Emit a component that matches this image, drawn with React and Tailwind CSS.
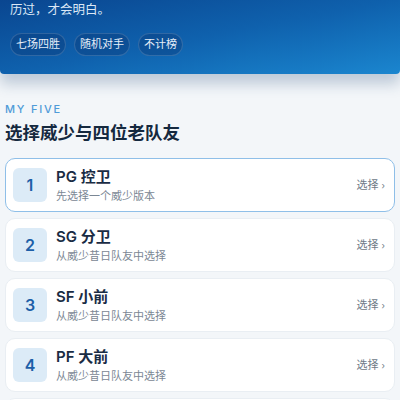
const TAGS = ['七场四胜', '随机对手', '不计榜']

const SLOTS = [
  { n: 1, title: 'PG 控卫', sub: '先选择一个威少版本', active: true },
  { n: 2, title: 'SG 分卫', sub: '从威少昔日队友中选择' },
  { n: 3, title: 'SF 小前', sub: '从威少昔日队友中选择' },
  { n: 4, title: 'PF 大前', sub: '从威少昔日队友中选择' },
  { n: 5, title: 'C 中锋', sub: '从威少昔日队友中选择' },
]

export default function App() {
  return (
    <div
      className="h-[400px] overflow-hidden bg-[#f3f6f9]"
      style={{ fontFamily: 'Inter, "Noto Sans CJK SC", sans-serif' }}
    >
      <section className="rounded-b-[4px] bg-gradient-to-br from-[#0a4690] via-[#0f61ad] to-[#1b86cf] px-[10px] pb-[18px] shadow-[0_10px_14px_rgba(30,70,120,0.25)]">
        <p className="text-[12.5px] leading-[20px] text-[#dce8f6]">历过，才会明白。</p>
        <div className="mt-[13px] flex gap-[8px]">
          {TAGS.map((t) => (
            <span
              key={t}
              className="flex h-[23px] items-center rounded-full border border-white/15 bg-[#0a3a78]/40 px-[5px] text-[11px] text-[#e6eef8]"
            >
              {t}
            </span>
          ))}
        </div>
      </section>

      <section className="px-[5px] pt-[28px]">
        <div className="text-[11px] font-medium leading-[14px] tracking-[0.16em] text-[#4f9bd8]">MY FIVE</div>
        <h2 className="mt-[5px] text-[17.5px] font-bold leading-[24px] text-[#15293f]">选择威少与四位老队友</h2>

        <ul className="mt-[13px] flex flex-col gap-[6px]">
          {SLOTS.map((s) => (
            <li
              key={s.n}
              className={[
                'flex h-[54px] items-center rounded-[10px] bg-white pl-[7px] pr-[9px]',
                s.active ? 'border border-[#8fbfe8]' : 'border border-[#e9eef3]',
              ].join(' ')}
            >
              <div className="grid size-[34px] place-items-center rounded-[6px] bg-[#dcebf7] text-[16px] font-semibold text-[#1d5fa8]">
                {s.n}
              </div>
              <div className="ml-[9px] flex-1">
                <div className="text-[15px] font-semibold leading-[18px] text-[#1a2c44]">{s.title}</div>
                <div className="mt-[3px] text-[11px] leading-[14px] text-[#7b8794]">{s.sub}</div>
              </div>
              <div className="flex items-center gap-[3px] text-[11px] text-[#6e7a87]">
                选择
                <span className="text-[9px] leading-none">›</span>
              </div>
            </li>
          ))}
        </ul>
      </section>
    </div>
  )
}
